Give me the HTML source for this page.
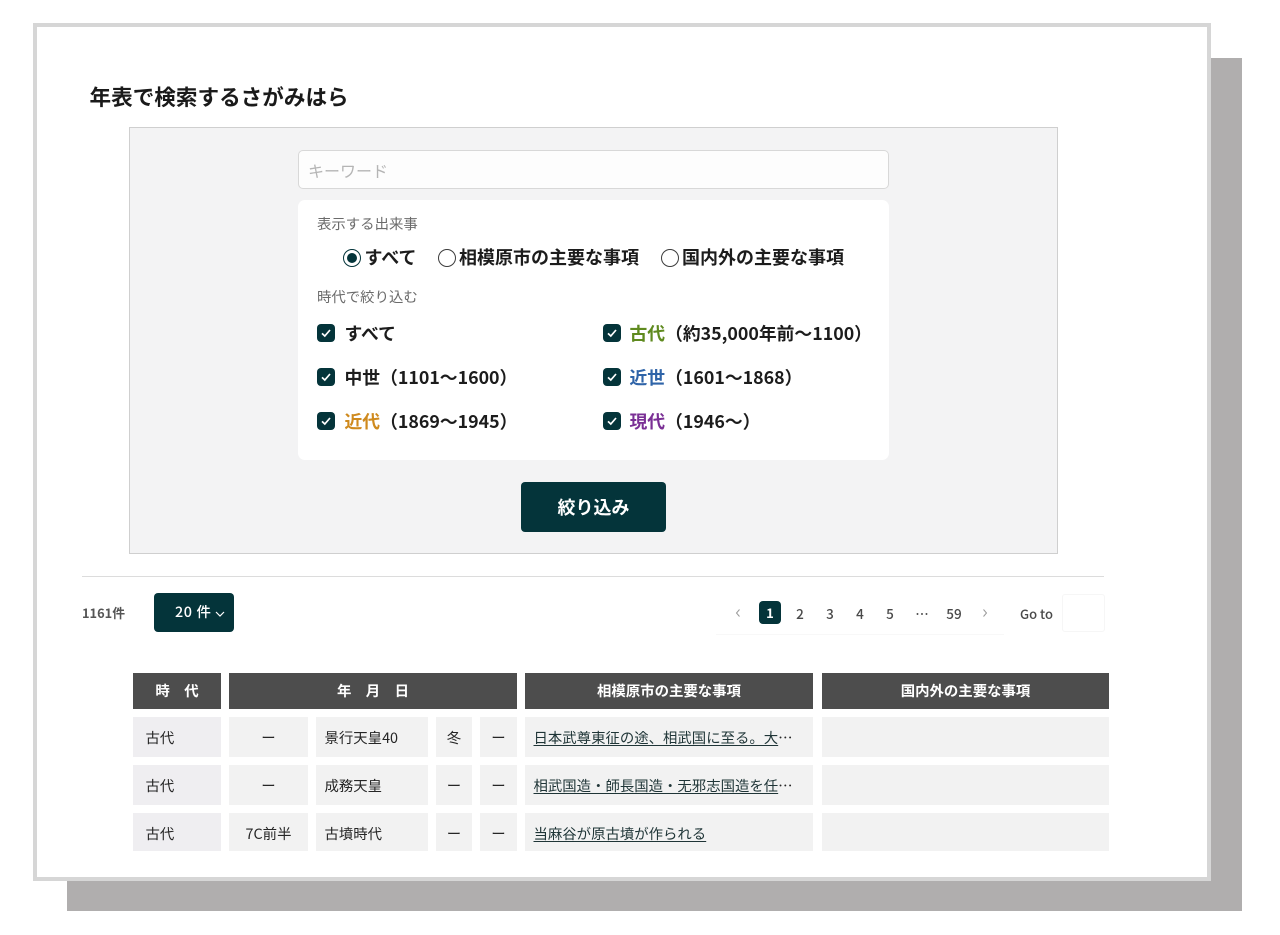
<!DOCTYPE html>
<html lang="ja"><head><meta charset="utf-8"><title>年表で検索するさがみはら</title>
<style>
html,body{margin:0;padding:0;background:#fff}
body{position:relative;width:1280px;height:935px;overflow:hidden;font-family:"Noto Sans CJK JP",sans-serif;color:#1a1a1a}
div,span.a,a,svg.a{position:absolute;white-space:nowrap;box-sizing:border-box}
.t{line-height:24px;height:24px}
.b{font-size:18px;font-weight:700;color:#1c1c1c}
.c{font-size:17.8px}
.lb{font-size:14.4px;color:#6b6b6b}
.cb{width:18px;height:18px;background:#04343a;border-radius:4px}
.cb svg{position:absolute;left:4px;top:4px}
.radio{width:18px;height:18px;border:1.6px solid #3c3c3c;border-radius:50%;background:#fff}
.th{background:#4d4d4d;color:#fff;font-weight:700;font-size:14.4px;text-align:center;height:36px;line-height:36px;top:673px}
.td{background:#f2f2f2;font-size:14.4px;color:#262626;text-align:center;height:39px;line-height:42px}
.l{text-align:left;padding-left:8.500px}
.era{background:#efeef1;text-align:left;padding-left:12.500px}
.lnk{text-align:left;padding-left:8.500px}
.lnk span{color:#1f3537;text-decoration:underline;text-underline-offset:2px}
.pg{font-size:13.5px;font-weight:500;color:#4a4a4a;top:602px;height:22px;line-height:23px;text-align:center;width:20px}
</style></head><body>
<div style="left:67px;top:58px;width:1175px;height:853px;background:#b0aeae"></div>
<div style="left:33px;top:23px;width:1178px;height:858px;background:#fff;border:4px solid #d6d6d6"></div>

<div style="left:89.500px;top:81px;font-size:21.6px;font-weight:700;line-height:32px;color:#1a1a1a">年表で検索するさがみはら</div>

<div style="left:129px;top:127px;width:929px;height:427px;background:#f3f3f4;border:1px solid #cfcfcf"></div>
<div style="left:298px;top:150px;width:591px;height:39px;background:#fdfdfd;border:1.500px solid #d8d8d8;border-radius:5px"></div>
<div style="left:308px;top:158px;font-size:16px;line-height:24px;color:#b5b5b5">キーワード</div>
<div style="left:298px;top:200px;width:591px;height:260px;background:#fff;border-radius:7px"></div>

<div class="t lb" style="left:317px;top:212px">表示する出来事</div>
<div class="radio" style="left:343px;top:249px;border-color:#04343a"></div>
<div style="left:347px;top:253px;width:10px;height:10px;border-radius:50%;background:#04343a"></div>
<div class="t b" style="left:364.500px;top:245px">すべて</div>
<div class="radio" style="left:438px;top:249px"></div>
<div class="t b" style="left:459px;top:245px">相模原市の主要な事項</div>
<div class="radio" style="left:661px;top:249px"></div>
<div class="t b" style="left:682px;top:245px">国内外の主要な事項</div>

<div class="t lb" style="left:317px;top:285px">時代で絞り込む</div>

<div class="cb" style="left:317px;top:324px"><svg width="10" height="10" viewBox="0 0 10 10"><path d="M1 5.4 3.8 8 9 2" fill="none" stroke="#fff" stroke-width="1.7"/></svg></div>
<div class="t b c" style="left:344.500px;top:321px">すべて</div>
<div class="cb" style="left:603px;top:324px"><svg width="10" height="10" viewBox="0 0 10 10"><path d="M1 5.4 3.8 8 9 2" fill="none" stroke="#fff" stroke-width="1.7"/></svg></div>
<div class="t b c" style="left:629.500px;top:321px"><span style="color:#5f8a1f">古代</span>（約35,000年前～1100）</div>
<div class="cb" style="left:317px;top:368px"><svg width="10" height="10" viewBox="0 0 10 10"><path d="M1 5.4 3.8 8 9 2" fill="none" stroke="#fff" stroke-width="1.7"/></svg></div>
<div class="t b c" style="left:344.500px;top:365px">中世（1101～1600）</div>
<div class="cb" style="left:603px;top:368px"><svg width="10" height="10" viewBox="0 0 10 10"><path d="M1 5.4 3.8 8 9 2" fill="none" stroke="#fff" stroke-width="1.7"/></svg></div>
<div class="t b c" style="left:629.500px;top:365px"><span style="color:#2f64a8">近世</span>（1601～1868）</div>
<div class="cb" style="left:317px;top:412px"><svg width="10" height="10" viewBox="0 0 10 10"><path d="M1 5.4 3.8 8 9 2" fill="none" stroke="#fff" stroke-width="1.7"/></svg></div>
<div class="t b c" style="left:344.500px;top:409px"><span style="color:#cf8a1e">近代</span>（1869～1945）</div>
<div class="cb" style="left:603px;top:412px"><svg width="10" height="10" viewBox="0 0 10 10"><path d="M1 5.4 3.8 8 9 2" fill="none" stroke="#fff" stroke-width="1.7"/></svg></div>
<div class="t b c" style="left:629.500px;top:409px"><span style="color:#7a2f95">現代</span>（1946～）</div>

<div style="left:521px;top:482px;width:145px;height:50px;background:#04343a;border-radius:4px;color:#fff;font-weight:700;font-size:18px;line-height:50px;text-align:center">絞り込み</div>

<div style="left:82px;top:576px;width:1022px;height:1px;background:#dcdcdc"></div>
<div style="left:82px;top:603px;font-size:12.800px;font-weight:700;line-height:20px;color:#555">1161件</div>
<div style="left:154px;top:593px;width:80px;height:39px;background:#04343a;border-radius:4px"></div>
<div style="left:175px;top:601px;font-size:14.4px;font-weight:500;line-height:22px;color:#fff;letter-spacing:.6px">20 件</div>
<svg class="a" style="left:215px;top:610px" width="10" height="8" viewBox="0 0 10 8"><path d="M1 2 5 6 9 2" fill="none" stroke="#fff" stroke-width="1.2"/></svg>

<svg class="a" style="left:735px;top:608px" width="6" height="10" viewBox="0 0 6 10"><path d="M4.500 1.500 1.500 5l3 3.500" fill="none" stroke="#999" stroke-width="1"/></svg>
<div style="left:759px;top:601px;width:22px;height:23px;background:#04343a;border-radius:4px;color:#fff;font-size:13px;font-weight:700;line-height:24px;text-align:center">1</div>
<div class="pg" style="left:790px">2</div>
<div class="pg" style="left:820px">3</div>
<div class="pg" style="left:850px">4</div>
<div class="pg" style="left:880px">5</div>
<div class="pg" style="left:912px">…</div>
<div class="pg" style="left:944px">59</div>
<svg class="a" style="left:982px;top:608px" width="6" height="10" viewBox="0 0 6 10"><path d="M1.500 1.500 4.500 5l-3 3.500" fill="none" stroke="#999" stroke-width="1"/></svg>
<div style="left:1020px;top:603px;font-size:13px;font-weight:500;line-height:21px;color:#4a4a4a">Go to</div>
<div style="left:1062px;top:594px;width:43px;height:38px;background:#fff;border:1px solid #f6f6f6;border-radius:3px"></div>
<div style="left:716px;top:634px;width:288px;height:1px;background:#f8f8f8"></div>

<div class="th" style="left:133px;width:88px"><span>時　代</span></div>
<div class="th" style="left:229px;width:288px">年　月　日</div>
<div class="th" style="left:525px;width:288px">相模原市の主要な事項</div>
<div class="th" style="left:822px;width:287px">国内外の主要な事項</div>

<div class="td era" style="left:133px;top:717px;width:88px;height:40px">古代</div>
<div class="td" style="left:229px;top:717px;width:79px;height:40px">ー</div>
<div class="td l" style="left:316px;top:717px;width:112px;height:40px">景行天皇40</div>
<div class="td" style="left:436px;top:717px;width:36px;height:40px">冬</div>
<div class="td" style="left:480px;top:717px;width:37px;height:40px">ー</div>
<div class="td lnk" style="left:525px;top:717px;width:288px;height:40px"><span>日本武尊東征の途、相武国に至る。大</span>…</div>
<div class="td" style="left:822px;top:717px;width:287px;height:40px"></div>

<div class="td era" style="left:133px;top:765px;width:88px;height:40px">古代</div>
<div class="td" style="left:229px;top:765px;width:79px;height:40px">ー</div>
<div class="td l" style="left:316px;top:765px;width:112px;height:40px">成務天皇</div>
<div class="td" style="left:436px;top:765px;width:36px;height:40px">ー</div>
<div class="td" style="left:480px;top:765px;width:37px;height:40px">ー</div>
<div class="td lnk" style="left:525px;top:765px;width:288px;height:40px"><span>相武国造・師長国造・无邪志国造を任</span>…</div>
<div class="td" style="left:822px;top:765px;width:287px;height:40px"></div>

<div class="td era" style="left:133px;top:813px;width:88px;height:38px">古代</div>
<div class="td" style="left:229px;top:813px;width:79px;height:38px">7C前半</div>
<div class="td l" style="left:316px;top:813px;width:112px;height:38px">古墳時代</div>
<div class="td" style="left:436px;top:813px;width:36px;height:38px">ー</div>
<div class="td" style="left:480px;top:813px;width:37px;height:38px">ー</div>
<div class="td lnk" style="left:525px;top:813px;width:288px;height:38px"><span>当麻谷が原古墳が作られる</span></div>
<div class="td" style="left:822px;top:813px;width:287px;height:38px"></div>
</body></html>
